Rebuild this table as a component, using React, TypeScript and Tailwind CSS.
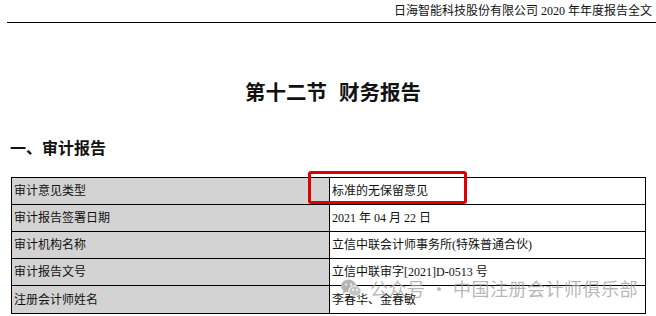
import React from 'react';

const rows: [string, string][] = [
  ['审计意见类型', '标准的无保留意见'],
  ['审计报告签署日期', '2021 年 04 月 22 日'],
  ['审计机构名称', '立信中联会计师事务所(特殊普通合伙)'],
  ['审计报告文号', '立信中联审字[2021]D-0513 号'],
  ['注册会计师姓名', '李春华、金春敏'],
];

const serif = { fontFamily: '"Liberation Serif", "Noto Sans CJK SC", serif' };

const WechatIcon = () => (
  <svg width="22" height="20" viewBox="0 0 22 20" fill="none">
    <ellipse cx="8.5" cy="8" rx="7.5" ry="6.5" fill="#b5b5b5" />
    <path d="M3.5 12.5 L2.5 16 L6.5 13.8 Z" fill="#b5b5b5" />
    <circle cx="6" cy="6.5" r="1" fill="#fff" />
    <circle cx="11" cy="6.5" r="1" fill="#fff" />
    <ellipse cx="15" cy="13" rx="6.2" ry="5.2" fill="#c4c4c4" stroke="#fff" strokeWidth="1" />
    <path d="M18.5 17 L19.8 19.5 L16.5 17.8 Z" fill="#c4c4c4" />
    <circle cx="13" cy="12" r="0.9" fill="#fff" />
    <circle cx="17" cy="12" r="0.9" fill="#fff" />
  </svg>
);

export default function App() {
  return (
    <div className="relative w-[656px] h-[316px] overflow-hidden bg-white text-[#111]">
      {/* page header */}
      <div className="ml-[7px] h-[23px] border-b-[1.5px] border-black flex items-center justify-end pr-[4px]">
        <span className="text-[12px] leading-none" style={serif}>
          日海智能科技股份有限公司 2020 年年度报告全文
        </span>
      </div>

      <h1
        className="mt-[54px] flex justify-center gap-[12px] text-[20.5px] leading-[28px] font-bold pl-[10px]"
        style={{ fontFamily: '"Noto Sans CJK SC", sans-serif' }}
      >
        <span>第十二节</span>
        <span>财务报告</span>
      </h1>

      <h2
        className="mt-[31px] ml-[10px] text-[16px] leading-[22px] font-bold"
        style={{ fontFamily: '"Noto Sans CJK SC", sans-serif' }}
      >
        一、审计报告
      </h2>

      <div className="mt-[19px] ml-[11px] w-[635px] border border-black" style={serif}>
        {rows.map(([k, v], i) => (
          <div
            key={k}
            className={`flex h-[27px] ${i < rows.length - 1 ? 'border-b border-black' : 'h-[26px]'}`}
          >
            <div className="w-[318px] bg-[#d3d3d3] border-r border-black flex items-center pl-[2px] text-[12px]">
              {k}
            </div>
            <div className="flex-1 flex items-center pl-[2px] text-[12px]">{v}</div>
          </div>
        ))}
      </div>

      {/* highlight box */}
      <div className="absolute left-[308px] top-[171px] w-[159px] h-[33px] border-[3.5px] border-[#e10000] rounded-[3px]" />

      {/* watermark */}
      <div
        className="absolute left-[340px] top-[277px] flex items-center gap-[8px] text-[18px] leading-[22px] tracking-[0.5px] text-[#a0a0a0]/75 pointer-events-none"
        style={{ fontFamily: '"Noto Sans CJK SC", sans-serif' }}
      >
        <WechatIcon />
        <span>公众号 · 中国注册会计师俱乐部</span>
      </div>
    </div>
  );
}
